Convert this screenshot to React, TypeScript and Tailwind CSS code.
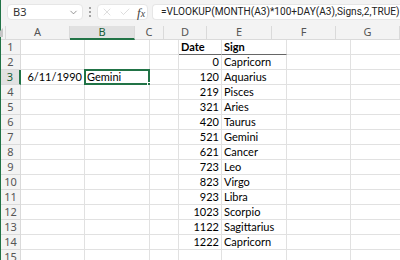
import { ChevronDown, X, Check } from 'lucide-react';

const cols = [
  { key: 'A', w: 'w-[64px]' },
  { key: 'B', w: 'w-[65px]' },
  { key: 'C', w: 'w-[29px]' },
  { key: 'D', w: 'w-[43px]' },
  { key: 'E', w: 'w-[65px]' },
  { key: 'F', w: 'w-[64px]' },
  { key: 'G', w: 'w-[64px]' },
];

const signs: [number, string][] = [
  [0, 'Capricorn'],
  [120, 'Aquarius'],
  [219, 'Pisces'],
  [321, 'Aries'],
  [420, 'Taurus'],
  [521, 'Gemini'],
  [621, 'Cancer'],
  [723, 'Leo'],
  [823, 'Virgo'],
  [923, 'Libra'],
  [1023, 'Scorpio'],
  [1122, 'Sagittarius'],
  [1222, 'Capricorn'],
];

const cellFont = { fontFamily: 'Lato, "Open Sans", sans-serif' };

function cellContent(row: number, col: string) {
  if (row === 1 && col === 'D') return { text: 'Date', bold: true };
  if (row === 1 && col === 'E') return { text: 'Sign', bold: true };
  if (row === 3 && col === 'A') return { text: '6/11/1990', right: true };
  if (row === 3 && col === 'B') return { text: 'Gemini' };
  const s = signs[row - 2];
  if (s && col === 'D') return { text: String(s[0]), right: true };
  if (s && col === 'E') return { text: s[1] };
  return null;
}

export default function App() {
  const rows = Array.from({ length: 15 }, (_, i) => i + 1);

  return (
    <div className="w-[400px] h-[260px] overflow-hidden bg-[#f3f3f3] flex" style={{ fontFamily: '"Noto Sans", "Open Sans", sans-serif' }}>
      <div className="w-px h-full bg-[#217346] shrink-0" />
      <div className="flex-1 flex flex-col min-w-0">
        {/* formula bar */}
        <div className="h-[26px] flex items-start pt-[4px] shrink-0">
          <div className="ml-[6px] w-[76px] h-[16px] bg-white rounded-[4px] border border-[#e6e6e6] flex items-center justify-between pl-[5px] pr-[3px]">
            <span className="text-[11px] text-[#333]">B3</span>
            <ChevronDown className="w-[11px] h-[11px] text-[#666]" strokeWidth={1.5} />
          </div>
          <div className="w-[14px] h-[16px] flex flex-col items-center justify-center gap-[2px]">
            <div className="w-[2px] h-[2px] bg-[#888] rounded-full" />
            <div className="w-[2px] h-[2px] bg-[#888] rounded-full" />
            <div className="w-[2px] h-[2px] bg-[#888] rounded-full" />
          </div>
          <div className="w-[51px] h-[16px] bg-white rounded-[4px] border border-[#e6e6e6] flex items-center pl-[3px] gap-[6px]">
            <X className="w-[12px] h-[12px] text-[#c8c8c8]" strokeWidth={1.2} />
            <Check className="w-[12px] h-[12px] text-[#c8c8c8]" strokeWidth={1.2} />
            <span className="text-[13px] italic text-[#444] leading-none" style={{ fontFamily: '"Liberation Serif", serif' }}>
              f<span className="text-[10px]">x</span>
            </span>
          </div>
          <div className="ml-[4px] flex-1 h-[16px] bg-white rounded-l-[4px] border border-r-0 border-[#e6e6e6] flex items-center pl-[8px] overflow-hidden">
            <span className="text-[10.1px] text-[#222] whitespace-nowrap" style={{ fontFamily: 'Roboto, sans-serif' }}>
              =VLOOKUP(MONTH(A3)*100+DAY(A3),Signs,2,TRUE)
            </span>
          </div>
        </div>

        {/* column headers */}
        <div className="flex h-[14px] shrink-0">
          <div className="w-[20px] border-r border-b border-[#dadada] relative">
            <div className="absolute right-[2px] bottom-[2px] w-0 h-0 border-l-[9px] border-l-transparent border-b-[9px] border-b-[#c6c6c6]" />
          </div>
          {cols.map((c) => (
            <div
              key={c.key}
              className={`${c.w} shrink-0 border-r border-[#dadada] flex items-center justify-center text-[11px] ${
                c.key === 'B' ? 'bg-[#e1e1e1] text-[#185c37] border-b-2 border-b-[#217346]' : 'text-[#555] border-b border-b-[#dadada]'
              }`}
            >
              {c.key}
            </div>
          ))}
        </div>

        {/* rows */}
        {rows.map((r) => (
          <div key={r} className="flex h-[15px] shrink-0">
            <div
              className={`w-[20px] shrink-0 border-b border-[#dadada] flex items-center justify-center text-[11px] ${
                r === 3 ? 'bg-[#e1e1e1] text-[#185c37] border-r-2 border-r-[#217346]' : 'text-[#555] border-r border-r-[#dadada]'
              }`}
            >
              {r}
            </div>
            {cols.map((c) => {
              const content = cellContent(r, c.key);
              const selected = r === 3 && c.key === 'B';
              const underline = r === 1 && (c.key === 'D' || c.key === 'E');
              return (
                <div
                  key={c.key}
                  className={`${c.w} shrink-0 bg-white border-r border-[#e1e1e1] relative flex items-center pt-px text-[11px] text-black whitespace-nowrap ${
                    underline ? 'border-b border-b-[#666]' : 'border-b border-b-[#e1e1e1]'
                  } ${content?.right ? 'justify-end pr-[2px]' : 'pl-[2px]'} ${content?.bold ? 'font-bold' : ''}`}
                  style={cellFont}
                >
                  {content?.text}
                  {selected && (
                    <>
                      <div className="absolute -left-px -top-px -right-px -bottom-px border-2 border-[#217346]" />
                      <div className="absolute -right-[3px] -bottom-[3px] w-[5px] h-[5px] bg-[#217346] border border-white" />
                    </>
                  )}
                </div>
              );
            })}
          </div>
        ))}
      </div>
    </div>
  );
}
